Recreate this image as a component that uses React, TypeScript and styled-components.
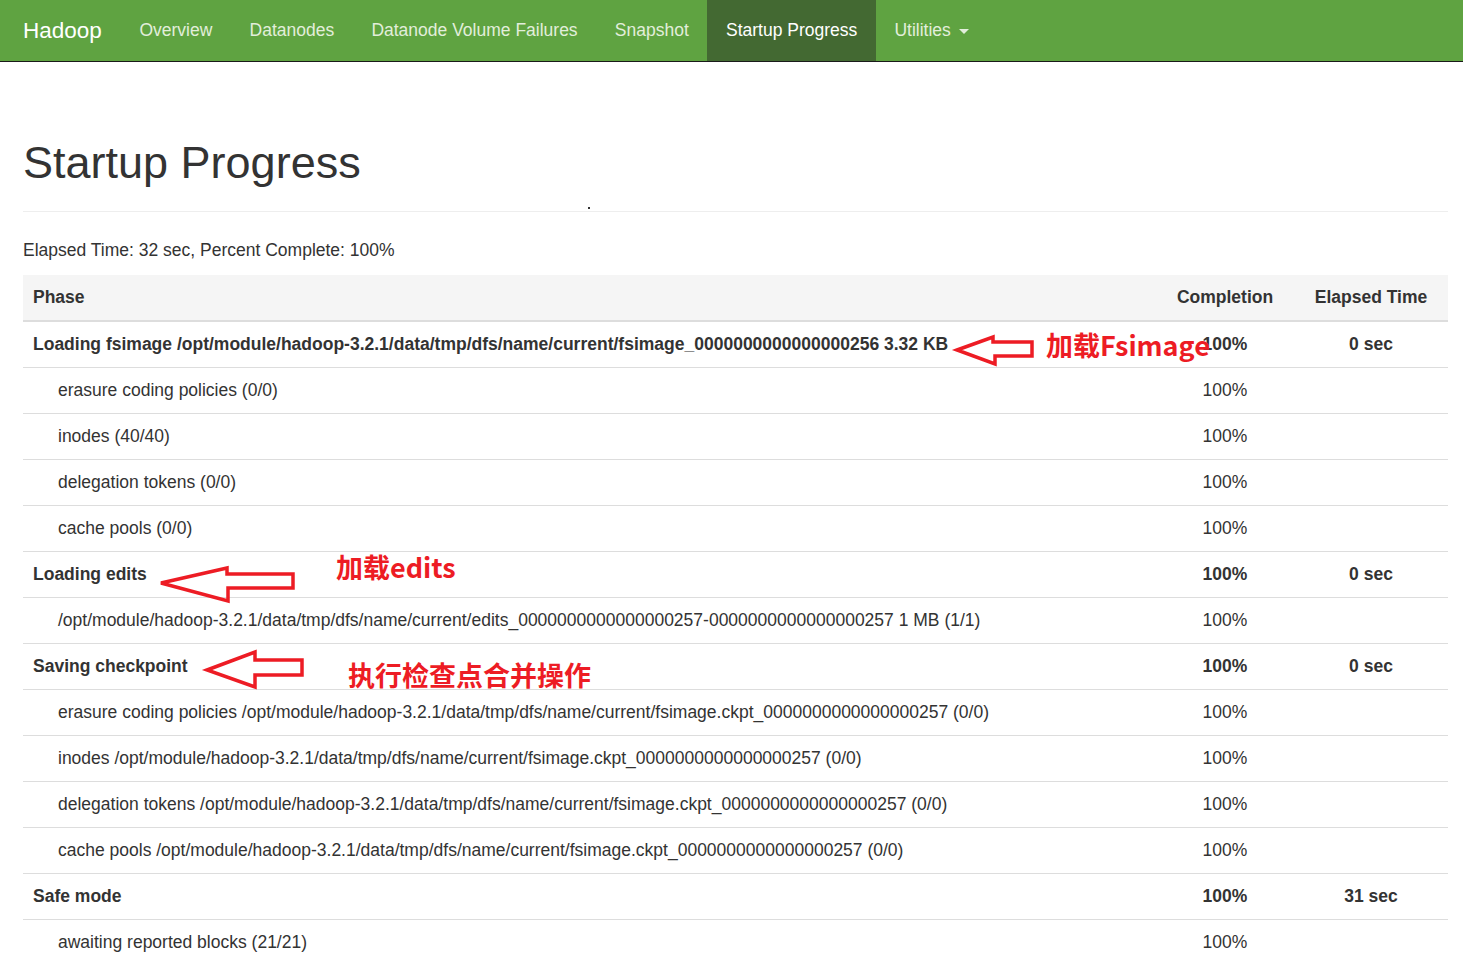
import React from "react";
import styled, { createGlobalStyle } from "styled-components";

const GlobalStyle = createGlobalStyle`
  html, body {
    margin: 0;
    padding: 0;
    background: #fff;
  }
  body {
    font-family: "Liberation Sans", Arial, Helvetica, sans-serif;
    font-size: 17.5px;
    line-height: 25px;
    color: #333;
  }
  * { box-sizing: border-box; }
`;

const Root = styled.div`
  position: relative;
  width: 1463px;
  min-height: 976px;
`;

const Navbar = styled.nav`
  height: 62px;
  background: #5fa341;
  border-bottom: 1px solid #1a1a1a;
  display: flex;
  align-items: stretch;
  padding-left: 4px;
`;

const Brand = styled.a`
  display: flex;
  align-items: center;
  padding: 0 19px;
  font-size: 22.5px;
  color: #fff;
  text-decoration: none;
`;

const NavList = styled.ul`
  display: flex;
  list-style: none;
  margin: 0;
  padding: 0;
`;

const NavLink = styled.a<{ $active?: boolean }>`
  display: flex;
  align-items: center;
  height: 61px;
  padding: 0 18.6px;
  font-size: 17.5px;
  color: ${(p) => (p.$active ? "#fff" : "#e2eedb")};
  background: ${(p) => (p.$active ? "#436932" : "transparent")};
  text-decoration: none;
  white-space: nowrap;
`;

const Caret = styled.span`
  display: inline-block;
  width: 0;
  height: 0;
  margin-left: 8px;
  margin-top: 2px;
  border-top: 5px solid #e2eedb;
  border-left: 5px solid transparent;
  border-right: 5px solid transparent;
`;

const Container = styled.main`
  padding: 0 15px 0 23px;
`;

const PageHeader = styled.div`
  margin-top: 76px;
  padding-bottom: 11.25px;
  border-bottom: 1px solid #eee;
`;

const Title = styled.h1`
  margin: 0 0 12.5px;
  font-size: 45px;
  line-height: 49.5px;
  font-weight: 500;
  color: #333;
`;

const Summary = styled.p`
  margin: 26px 0 12px;
  line-height: 25px;
`;

const Table = styled.table`
  width: 100%;
  border-collapse: collapse;
  border-spacing: 0;
  table-layout: fixed;
`;

const Col = styled.col<{ $w?: number }>`
  width: ${(p) => (p.$w ? `${p.$w}px` : "auto")};
`;

const Th = styled.th<{ $center?: boolean }>`
  background: #f5f5f5;
  padding: 10px;
  line-height: 25px;
  font-weight: bold;
  text-align: ${(p) => (p.$center ? "center" : "left")};
  border-bottom: 2px solid #ddd;
  white-space: nowrap;
`;

const Td = styled.td<{ $center?: boolean; $bold?: boolean; $step?: boolean }>`
  padding: 10px 10px 10px ${(p) => (p.$step ? "35px" : "10px")};
  line-height: 25px;
  border-top: 1px solid #ddd;
  text-align: ${(p) => (p.$center ? "center" : "left")};
  font-weight: ${(p) => (p.$bold ? "bold" : "normal")};
  white-space: nowrap;
`;

const Overlay = styled.svg`
  position: absolute;
  left: 0;
  top: 0;
  pointer-events: none;
`;

const Note = styled.span<{ $x: number; $y: number }>`
  position: absolute;
  left: ${(p) => p.$x}px;
  top: ${(p) => p.$y}px;
  font-family: "Noto Sans CJK SC", "Microsoft YaHei", sans-serif;
  font-weight: bold;
  font-size: 27px;
  line-height: 27px;
  color: #ed1c24;
  white-space: nowrap;
  pointer-events: none;
`;

const Speck = styled.span`
  position: absolute;
  left: 588px;
  top: 207px;
  width: 2px;
  height: 2px;
  background: #333;
`;

type Row = { name: string; phase: boolean; completion: string; elapsed?: string };

const base = "/opt/module/hadoop-3.2.1/data/tmp/dfs/name/current/";
const ckpt = `${base}fsimage.ckpt_0000000000000000257`;

const rows: Row[] = [
  { name: `Loading fsimage ${base}fsimage_0000000000000000256 3.32 KB`, phase: true, completion: "100%", elapsed: "0 sec" },
  { name: "erasure coding policies (0/0)", phase: false, completion: "100%" },
  { name: "inodes (40/40)", phase: false, completion: "100%" },
  { name: "delegation tokens (0/0)", phase: false, completion: "100%" },
  { name: "cache pools (0/0)", phase: false, completion: "100%" },
  { name: "Loading edits", phase: true, completion: "100%", elapsed: "0 sec" },
  { name: `${base}edits_0000000000000000257-0000000000000000257 1 MB (1/1)`, phase: false, completion: "100%" },
  { name: "Saving checkpoint", phase: true, completion: "100%", elapsed: "0 sec" },
  { name: `erasure coding policies ${ckpt} (0/0)`, phase: false, completion: "100%" },
  { name: `inodes ${ckpt} (0/0)`, phase: false, completion: "100%" },
  { name: `delegation tokens ${ckpt} (0/0)`, phase: false, completion: "100%" },
  { name: `cache pools ${ckpt} (0/0)`, phase: false, completion: "100%" },
  { name: "Safe mode", phase: true, completion: "100%", elapsed: "31 sec" },
  { name: "awaiting reported blocks (21/21)", phase: false, completion: "100%" },
];

const navItems = ["Overview", "Datanodes", "Datanode Volume Failures", "Snapshot", "Startup Progress"];

const arrows = [
  "957,350 993,337 993,342 1032,342 1032,356 995,356 995,364",
  "161,583 227,568 227,574 293,574 293,588 228,588 228,601",
  "207,670 255,652 255,660 302,660 302,675 255,675 255,687",
];

export default function App() {
  return (
    <Root>
      <GlobalStyle />
      <Navbar>
        <Brand href="#">Hadoop</Brand>
        <NavList>
          {navItems.map((item) => (
            <li key={item}>
              <NavLink href="#" $active={item === "Startup Progress"}>
                {item}
              </NavLink>
            </li>
          ))}
          <li>
            <NavLink href="#">
              Utilities
              <Caret />
            </NavLink>
          </li>
        </NavList>
      </Navbar>
      <Container>
        <PageHeader>
          <Title>Startup Progress</Title>
        </PageHeader>
        <Summary>Elapsed Time: 32 sec, Percent Complete: 100%</Summary>
        <Table>
          <colgroup>
            <Col />
            <Col $w={138} />
            <Col $w={154} />
          </colgroup>
          <thead>
            <tr>
              <Th>Phase</Th>
              <Th $center>Completion</Th>
              <Th $center>Elapsed Time</Th>
            </tr>
          </thead>
          <tbody>
            {rows.map((r, i) => (
              <tr key={i}>
                <Td $bold={r.phase} $step={!r.phase}>
                  {r.name}
                </Td>
                <Td $center $bold={r.phase}>
                  {r.completion}
                </Td>
                <Td $center $bold={r.phase}>
                  {r.elapsed ?? ""}
                </Td>
              </tr>
            ))}
          </tbody>
        </Table>
      </Container>
      <Speck />
      <Overlay width={1463} height={976} viewBox="0 0 1463 976">
        {arrows.map((pts, i) => (
          <polygon
            key={i}
            points={pts}
            fill="none"
            stroke="#ed1c24"
            strokeWidth={3.5}
            strokeLinejoin="miter"
          />
        ))}
      </Overlay>
      <Note $x={1046} $y={331}>加载Fsimage</Note>
      <Note $x={336} $y={553}>加载edits</Note>
      <Note $x={348} $y={661}>执行检查点合并操作</Note>
    </Root>
  );
}
